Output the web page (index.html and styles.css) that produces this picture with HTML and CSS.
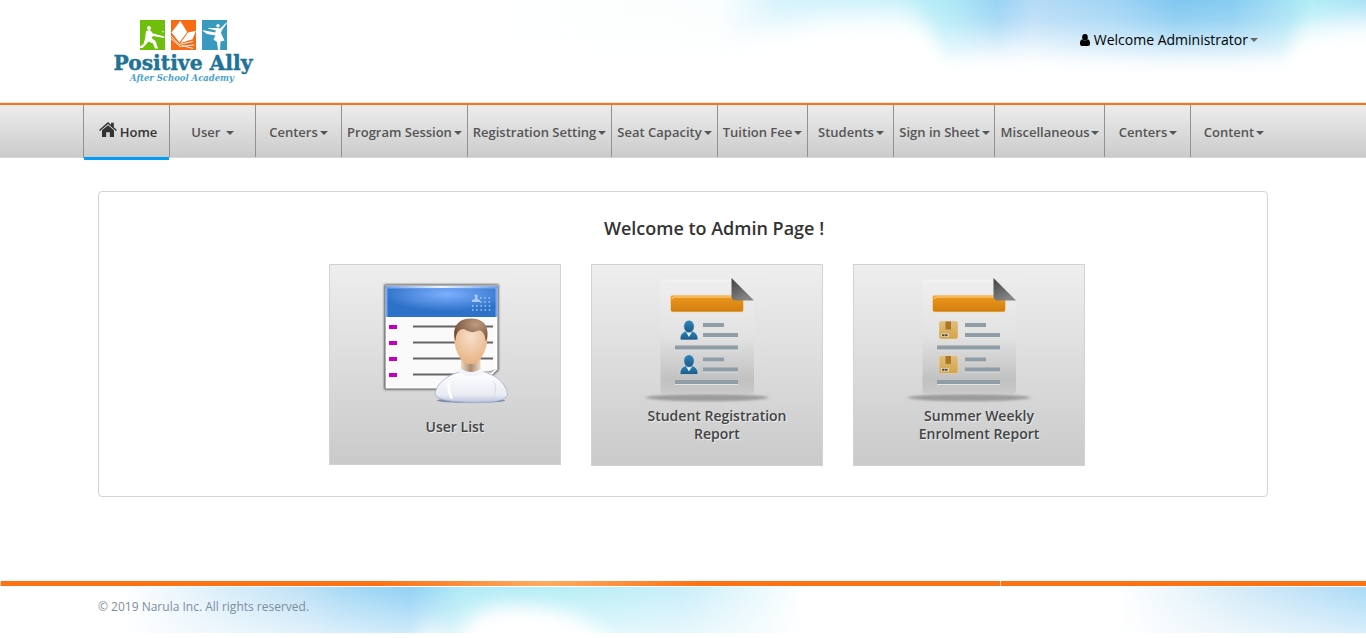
FILE: index.html
```html
<!DOCTYPE html>
<html lang="en">
<head>
<meta charset="utf-8">
<title>Positive Ally</title>
<link rel="stylesheet" href="styles.css">
</head>
<body>
<header class="header">
  <svg class="sky" viewBox="0 0 900 102" preserveAspectRatio="none" aria-hidden="true">
    <defs>
      <filter id="soft" x="-100%" y="-100%" width="300%" height="300%"><feGaussianBlur stdDeviation="20 16"/></filter>
      <filter id="cloud" x="-50%" y="-50%" width="200%" height="200%"><feGaussianBlur stdDeviation="5 14"/></filter>
      <linearGradient id="fadeDown" x1="0" y1="0" x2="0" y2="1"><stop offset="0" stop-color="#fff" stop-opacity="0"/><stop offset=".2" stop-color="#fff" stop-opacity=".17"/><stop offset=".45" stop-color="#fff" stop-opacity=".6"/><stop offset=".6" stop-color="#fff" stop-opacity=".9"/><stop offset=".72" stop-color="#fff"/></linearGradient>
      <linearGradient id="skyBlue" x1="0" y1="0" x2="1" y2="0">
        <stop offset="0" stop-color="#fff"/><stop offset=".28" stop-color="#fbfefe"/><stop offset=".35" stop-color="#d6f3fc"/><stop offset=".48" stop-color="#c2f0f9"/><stop offset=".54" stop-color="#aee8f6"/><stop offset=".59" stop-color="#98d3f4"/><stop offset=".63" stop-color="#b5dbf6"/><stop offset=".72" stop-color="#a0d4f4"/><stop offset=".79" stop-color="#7fc7f0"/><stop offset=".85" stop-color="#86ccf1"/><stop offset=".9" stop-color="#a0dcf4"/><stop offset=".94" stop-color="#b0eef6"/><stop offset="1" stop-color="#a5e0f5"/>
      </linearGradient>
    </defs>
    <rect width="900" height="102" fill="url(#skyBlue)"/>
    <rect width="900" height="102" fill="url(#fadeDown)"/>
    <path d="M240 150V65C290 24 370 12 430 14C468 18 482 50 487 150Z" fill="#fff" filter="url(#cloud)"/>
    <path d="M817 150C816 80 820 38 842 30Q870 20 940 18V150Z" fill="#fff" filter="url(#cloud)"/>
    <ellipse cx="550" cy="74" rx="55" ry="24" fill="#fff" opacity=".6" filter="url(#soft)"/>
  </svg>
  <div class="brand">
    <svg class="brand-tiles" viewBox="0 0 88 30" aria-hidden="true">
      <rect width="25" height="30" fill="#6fbe0c"/><rect x="31" width="25" height="30" fill="#f96a15"/><rect x="62" width="25" height="30" fill="#379abe"/>
      <circle cx="9" cy="8" r="2" fill="#fff"/><circle cx="22.800" cy="11.800" r=".8" fill="#fff"/>
      <path d="M6 11L10 10L13 13.500L24.500 16.500L24 18L13 16L11.500 18L15.500 21L18 28.500H15L13 23.500L8.500 21.500L5.500 25L2.500 28H0V26.500L3.500 24L5 19Z" fill="#fff"/>
      <path d="M31.500 12.500L40.300 1L47.200 12L39.500 22.500Z" fill="#fff"/>
      <path d="M48 12.500L56 10.700L52.500 19.300L40.500 23Z" fill="#fff"/>
      <path d="M31 16L39 24.500L53 21.500M31 18.500L40 26.500L54 25M42 25.500L53 28.500" fill="none" stroke="#fff" stroke-width=".9"/>
      <circle cx="78" cy="5.800" r="1.700" fill="#fff"/><path d="M77 8L80 8.500L86.500 2.500L87 3.200L82 10L81 13L84.500 20.500L80.500 21.500L80 30H78L77 22L73.500 19.500L75.500 15.500L67 14L62.500 10.800L63.500 10.200L75 12.500L76 10.500L68 8.500V8Z" fill="#fff"/>
    </svg>
    <svg class="brand-name" viewBox="0 0 142 36" role="img" aria-label="Positive Ally, After School Academy">
      <text class="brand-title" x=".5" y="20" textLength="139" lengthAdjust="spacingAndGlyphs">Positive Ally</text>
      <text class="brand-sub" x="17" y="30.700" textLength="104" lengthAdjust="spacingAndGlyphs">After School Academy</text>
    </svg>
  </div>
  <div class="account"><svg class="user-icon" viewBox="0 0 10 12" aria-hidden="true"><ellipse cx="5" cy="3.200" rx="2.800" ry="3.200"/><path d="M2.200 5.200C0 6 0 8 0 10Q0 12 2 12H8Q10 12 10 10C10 8 10 6 7.800 5.200Q5 8 2.200 5.200Z"/></svg><span>Welcome Administrator</span><i class="caret"></i></div>
</header>
<nav class="nav">
  <ul class="menu">
    <li class="item active"><svg class="home-icon" viewBox="0 0 18 15" aria-hidden="true"><path d="M9 3.200L15 8.300V15H10.800V10.300H7.200V15H3V8.300Z"/><path d="M0 8L9 0L12 2.700V.7H14.800V5.200L18 8L17 9L9 2L1 9Z"/></svg>Home</li>
    <li class="item">User&nbsp;<i class="caret"></i></li>
    <li class="item">Centers<i class="caret"></i></li>
    <li class="item">Program Session<i class="caret"></i></li>
    <li class="item">Registration Setting<i class="caret"></i></li>
    <li class="item">Seat Capacity<i class="caret"></i></li>
    <li class="item">Tuition Fee<i class="caret"></i></li>
    <li class="item nudged">Students<i class="caret"></i></li>
    <li class="item nudged">Sign in Sheet<i class="caret"></i></li>
    <li class="item nudged">Miscellaneous<i class="caret"></i></li>
    <li class="item nudged">Centers<i class="caret"></i></li>
    <li class="item nudged">Content<i class="caret"></i></li>
  </ul>
</nav>
<main class="panel">
  <h1 class="title">Welcome to Admin Page !</h1>
  <div class="cards">
    <section class="card card-users">
      <svg class="art" viewBox="0 0 132 128" aria-hidden="true">
        <defs>
          <radialGradient id="blueHead" cx=".55" cy=".2" r=".6"><stop stop-color="#7eb0ff"/><stop offset="1" stop-color="#2d71c8"/></radialGradient>
          <linearGradient id="rim"><stop stop-color="#6f9fe6"/><stop offset=".5" stop-color="#edf4ff"/><stop offset="1" stop-color="#6f9fe6"/></linearGradient>
          <radialGradient id="skin" cx=".5" cy=".35" r=".65"><stop stop-color="#f6dfca"/><stop offset="1" stop-color="#e8b384"/></radialGradient>
          <radialGradient id="hair" cx=".65" cy=".25" r=".7"><stop stop-color="#bd9b80"/><stop offset="1" stop-color="#77503a"/></radialGradient>
          <linearGradient id="shirt" x1="0" y1="0" x2="0" y2="1"><stop stop-color="#fff"/><stop offset=".75" stop-color="#e9ebf3"/><stop offset="1" stop-color="#b5bfdb"/></linearGradient>
          <linearGradient id="neck"><stop stop-color="#ecd9c2"/><stop offset=".5" stop-color="#a98c70"/><stop offset="1" stop-color="#eddbc6"/></linearGradient>
          <filter id="shade" x="-10%" y="-10%" width="120%" height="120%"><feGaussianBlur stdDeviation=".8"/></filter>
        </defs>
        <path d="M5.300 5.500H119.500V91L113 97L99 110.500H5.300Z" fill="#444" filter="url(#shade)"/>
        <path d="M7.500 7.500H117.500V90L112 95.500L99 108.500H7.500Z" fill="#fafafa" stroke="#fff" stroke-width="2"/>
        <path d="M103 92Q110 93 117 90L112 94Q107 93 103 92Z" fill="#aaa"/>
        <rect x="6.500" y="7" width="112" height="31" fill="#78a9f0"/><rect x="6.500" y="7" width="112" height="2" fill="url(#rim)"/><rect x="8.500" y="9.500" width="108" height="28.500" fill="url(#blueHead)"/>
        <path d="M93 23V21L96 20V18Q94.500 15.500 97 15.500Q99.500 15.500 98.500 18V20L101 21V23Z" fill="#a9cbf3"/>
        <path d="M101 19H112M101 23H112M93 27H112M93 31H112" stroke="#a9cbf3" stroke-width="1.500" stroke-dasharray="1.500 2.700"/>
        <path d="M10 48H18M10 64H18M10 80H18M10 96H18" stroke="#c300b8" stroke-width="4"/>
        <path d="M34 47.500H114M34 63.500H114M34 79.500H114M34 95.500H106" stroke="#656565" stroke-width="2"/>
        <ellipse cx="92" cy="121.500" rx="34" ry="2.500" fill="#7f8cac"/>
        <path d="M56 115C57 106 66 97 80 93H105C120 97 127 106 128.500 115C128.500 120 121 122 112 123Q92 125 71 122Q57 120 56 115Z" fill="url(#shirt)" stroke="#a3aecb" stroke-width=".8"/>
        <path d="M70 101Q66 105 71 119L74 120Q70 109 71 102Z" fill="#fff"/><path d="M115 119Q119 107 114 102" stroke="#d7dceb" fill="none"/>
        <path d="M82 78H101.500V91Q102 95 92 95Q82 95 82 91Z" fill="url(#neck)"/><path d="M81 89Q92 97 103 89L105 94Q93 101 80 94Z" fill="#f3f4fb"/>
        <path d="M75 57Q75 43 91.500 43Q108.500 43 108.500 58Q108.500 69 102 79Q97 86 92 85Q86 86 81 79Q75 69 75 57Z" fill="url(#skin)"/>
        <path d="M76.500 62C73 52 76 39.500 92 39.500C108 39.500 111 52 107 63C106 56 104 50 98 52Q92 55 85 50Q77 50 76.500 62Z" fill="url(#hair)"/>
      </svg>
      <h2 class="label">User List</h2>
    </section>
    <section class="card">
      <svg class="art" viewBox="0 0 132 128" aria-hidden="true">
        <defs>
          <linearGradient id="paper" x1="0" y1="0" x2="0" y2="1"><stop stop-color="#efefef"/><stop offset=".5" stop-color="#e2e2e2"/><stop offset=".88" stop-color="#c1c1c1"/><stop offset="1" stop-color="#cacaca"/></linearGradient>
          <linearGradient id="fold" x1="0" y1="0" x2=".5" y2="1"><stop stop-color="#414141"/><stop offset="1" stop-color="#858585"/></linearGradient>
          <linearGradient id="amber" x1="0" y1="0" x2="0" y2="1"><stop stop-color="#ed981f"/><stop offset="1" stop-color="#d17e0e"/></linearGradient>
          <linearGradient id="person" x1="0" y1="0" x2="0" y2="1"><stop stop-color="#2b87b8"/><stop offset="1" stop-color="#1d588a"/></linearGradient>
          <linearGradient id="box" x1="0" y1="0" x2="0" y2="1"><stop stop-color="#dfbd80"/><stop offset="1" stop-color="#d5a345"/></linearGradient>
          <filter id="blur" x="-10%" y="-100%" width="120%" height="300%"><feGaussianBlur stdDeviation="2 1"/></filter>
          <g id="sheet">
            <ellipse cx="66" cy="122.700" rx="61" ry="3.500" fill="#9c9c9c" filter="url(#blur)"/>
            <path d="M23 4H90L113 26V115Q113 119 109 119H23Q19.500 119 19.500 115V8Q19.500 4 23 4Z" fill="url(#paper)"/>
            <path d="M20.500 11Q20.500 6.500 25 6H89" stroke="#f4f4f4" fill="none"/>
            <rect x="29.500" y="20.300" width="73" height="16.700" rx="2" fill="url(#amber)" stroke="#f4d9ae" stroke-width=".7"/>
            <path d="M31 24Q31.500 22 34 22H92" stroke="#f8c56d" stroke-width="1.500" fill="none"/>
            <path d="M90.500 3L113 25.500H95Q90.500 25.500 90.500 21Z" fill="url(#fold)"/>
            <path d="M62 50.800H83M62 61H97M34 73.500H97M62 85.300H83M62 95.500H97M34 108H97" stroke="#e1e4e5" stroke-width="4"/>
            <path d="M62 50H83M62 60H97M34 72.500H97M62 84.500H83M62 94.500H97M34 107H97" stroke="#8f9ea6" stroke-width="4"/>
          </g>
          <g id="pupil"><path d="M6 11L9 14L12 11Q18 13 18 19Q18 20 16 20H2Q0 20 0 19Q0 13 6 11Z" fill="url(#person)" stroke="#e8e8e8" stroke-width=".6"/><path d="M6 12L9 17L12 12Z" fill="#edf0f2"/><ellipse cx="9" cy="6.500" rx="5.200" ry="6.300" fill="url(#person)" stroke="#dce6ec" stroke-width=".5"/></g>
          <g id="parcel"><rect width="19" height="18" rx="2" fill="url(#box)" stroke="#eadfc9" stroke-width=".5"/><path d="M6.500 .500H12V9L10.500 8L9 9L7.500 8L6.500 9Z" fill="#a97625"/><rect x="2" y="12.500" width="8" height="3.500" fill="#e4dccb"/><path d="M3 14.300H9" stroke="#544936" stroke-width="2" stroke-dasharray="2.500 .6"/></g>
        </defs>
        <use href="#sheet"/><use href="#pupil" x="39" y="45"/><use href="#pupil" x="39" y="79.500"/>
      </svg>
      <h2 class="label">Student Registration<br>Report</h2>
    </section>
    <section class="card">
      <svg class="art" viewBox="0 0 132 128" aria-hidden="true"><use href="#sheet"/><use href="#parcel" x="36" y="46"/><use href="#parcel" x="36" y="80.500"/></svg>
      <h2 class="label">Summer Weekly<br>Enrolment Report</h2>
    </section>
  </div>
</main>
<footer class="footer">
  <div class="stripe"></div>
  <div class="foot-sky">
    <svg class="foot-art" viewBox="0 0 1366 47" preserveAspectRatio="none" aria-hidden="true">
      <defs>
        <filter id="mist" x="-50%" y="-80%" width="200%" height="260%"><feGaussianBlur stdDeviation="8 9"/></filter>
        <linearGradient id="band"><stop offset="0" stop-color="#fff"/><stop offset=".09" stop-color="#fff"/><stop offset=".17" stop-color="#d6ecf9"/><stop offset=".22" stop-color="#bfe1f6"/><stop offset=".25" stop-color="#a8d9f5"/><stop offset=".3" stop-color="#91d1f4"/><stop offset=".34" stop-color="#b1ebf6"/><stop offset=".42" stop-color="#b9eff7"/><stop offset=".5" stop-color="#c9eef9"/><stop offset=".59" stop-color="#fff"/><stop offset=".82" stop-color="#fff"/><stop offset=".91" stop-color="#d3eaf7"/><stop offset=".97" stop-color="#b9dff7"/><stop offset="1" stop-color="#a8daf6"/></linearGradient>
        <linearGradient id="pale" x1="0" y1="0" x2="0" y2="1"><stop stop-color="#fff" stop-opacity="0"/><stop offset="1" stop-color="#fff" stop-opacity=".55"/></linearGradient>
      </defs>
      <rect width="1366" height="47" fill="url(#band)"/><rect width="1366" height="47" fill="url(#pale)"/>
      <path d="M455 75C458 34 480 21 510 20C560 20 600 32 625 75Z" fill="#fff" filter="url(#mist)"/>
      <ellipse cx="433" cy="56" rx="18" ry="18" fill="#fff" opacity=".55" filter="url(#mist)"/>
    </svg>
    <p class="copy">© 2019 Narula Inc. All rights reserved.</p>
  </div>
</footer>
</body>
</html>
```

FILE: styles.css
```css
* { box-sizing: border-box; }
body { margin: 0; height: 638px; overflow: hidden; background: #fff; color: #333; font-family: "Open Sans", "Noto Sans", sans-serif; }
.header { position: relative; height: 102px; padding: 20px 108px 0 113px; display: flex; justify-content: space-between; align-items: flex-start; }
.sky { position: absolute; top: 0; right: 0; width: 900px; height: 102px; overflow: hidden; }
.brand { width: 142px; }
.brand-tiles { display: block; width: 88px; height: 30px; margin-left: 27px; }
.brand-name { display: block; width: 142px; height: 36px; overflow: visible; }
.brand-title { font: bold 20px "DejaVu Serif", serif; fill: #1d7396; stroke: #1d7396; stroke-width: .4px; }
.brand-sub { font: italic bold 9px "DejaVu Serif", serif; fill: #48a3c5; }
.account { position: relative; display: flex; align-items: center; height: 20px; margin-top: 10px; font-size: 14px; line-height: 20px; color: #000; }
.user-icon { width: 10px; height: 12px; margin-right: 4px; }
.caret { display: inline-block; width: 0; height: 0; margin-left: 2px; border-top: 4px solid #555; border-left: 4px solid transparent; border-right: 4px solid transparent; }
.account .caret { border-top-color: #666; }
.nav { height: 56px; padding-left: 83px; border-top: 1px solid #e5e5e5; background: linear-gradient(#ff7214, #ff7214) 0 0 / 100% 2px no-repeat, linear-gradient(#d6d6d6, #d6d6d6) 0 100% / 100% 1px no-repeat, linear-gradient(#eee, #cacaca); }
.menu { display: grid; grid-template-columns: 86px 86px 86px 126px 144px 106px 90px 86px 101px 110px 86px 86px; height: 54px; margin: 0; padding: 2px 0 0; list-style: none; }
.item { display: flex; align-items: center; justify-content: center; height: 52px; padding-top: 2px; border-left: 1px solid #919191; color: #555; font-size: 13px; font-weight: 600; white-space: nowrap; }
.item .caret { margin-top: 2px; }
.nudged { padding-left: 1px; }
.active { height: 55px; padding: 2px 0 3px 3px; color: #333; background: linear-gradient(#009cf5, #009cf5) 0 100% / 100% 3px no-repeat; border-left-color: transparent; border-image: linear-gradient(#919191 52px, transparent 52px) 1; }
.home-icon { width: 18px; height: 15px; margin: -5px 3px 0 0; fill: #333; }
.panel { width: 1170px; height: 306px; margin: 33px auto 0; border: 1px solid #d4d4d4; border-radius: 4px; padding: 24px 0 0 62px; }
.title { margin: 0; text-align: center; font-size: 18px; line-height: 25px; font-weight: 600; }
.cards { display: flex; justify-content: flex-start; align-items: flex-start; gap: 30px; margin: 23px 0 0 168px; }
.card { width: 232px; height: 202px; padding: 10px 0 0 20px; border: 1px solid #d2d2d2; background: linear-gradient(#eee, #cacaca); text-align: center; }
.card-users { height: 201px; padding-top: 14px; }
.art { display: block; width: 132px; height: 128px; margin-left: 29px; }
.label { margin: 4px 0 0; font-size: 14px; line-height: 18px; font-weight: 600; color: #444; text-shadow: 1px 1px 1px #eee; }
.card-users .label { margin-top: 11px; }
.footer { margin-top: 84px; }
.stripe { height: 5px; background: linear-gradient(#ffffffa0, #ffffffa0) 1000px 0 / 1px 100% no-repeat, linear-gradient(#ffffffa0, #ffffffa0) 0 0 / 1px 100% no-repeat, linear-gradient(90deg, #ff7214 0, #ff7214 380px, #ffab60 545px, #ff7214 700px, #ff7214 100%); }
.foot-sky { position: relative; height: 46px; margin-top: 1px; overflow: hidden; }
.foot-art { position: absolute; top: 0; left: 0; width: 100%; height: 46px; }
.copy { position: relative; margin: 10px 0 0 98px; font-size: 12px; line-height: 20px; color: #808d9d; }
```
